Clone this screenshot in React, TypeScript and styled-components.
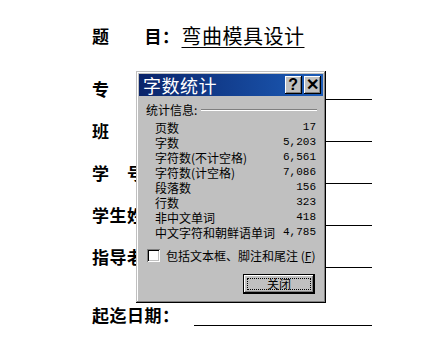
import React from "react";
import styled, { createGlobalStyle } from "styled-components";

const GlobalStyle = createGlobalStyle`
  html, body { margin: 0; padding: 0; background: #fff; }
  #root { width: 439px; height: 343px; }
`;

const Page = styled.div`
  position: relative;
  width: 439px;
  height: 343px;
  overflow: hidden;
  box-sizing: border-box;
  padding: 25px 0 0 92px;
  background: #fff;
  font-family: "Noto Sans CJK SC", sans-serif;
  color: #000;
`;

const FormRow = styled.div<{ $gap: number }>`
  display: flex;
  align-items: stretch;
  height: 22px;
  margin-top: ${(p) => p.$gap}px;
`;

const Label = styled.span`
  font-size: 17px;
  font-weight: 700;
  line-height: 22px;
  letter-spacing: 0.5px;
  white-space: pre;
`;

const TitleValue = styled.span`
  margin-left: 2px;
  font-size: 20px;
  line-height: 22px;
  letter-spacing: 0.5px;
  text-decoration: underline;
  text-underline-offset: 3px;
  text-decoration-thickness: 1px;
`;

const Blank = styled.span`
  margin-left: auto;
  margin-right: 67px;
  width: 178px;
  border-bottom: 1px solid #000;
`;

const Dialog = styled.div`
  position: absolute;
  left: 136px;
  top: 71px;
  width: 190px;
  height: 232px;
  box-sizing: border-box;
  padding: 3px;
  background: #c0c0c0;
  box-shadow: inset -1px -1px #000, inset 1px 1px #c0c0c0,
    inset -2px -2px #808080, inset 2px 2px #fff;
  display: flex;
  flex-direction: column;
  font-family: "Noto Sans CJK SC", sans-serif;
  font-size: 12px;
  color: #000;
`;

const TitleBar = styled.div`
  height: 22px;
  display: flex;
  align-items: center;
  padding: 0 2px 0 4px;
  background: linear-gradient(to right, #0a246a, #1c5cb8);
  color: #fff;
  font-size: 18px;
  line-height: 22px;
  letter-spacing: 0.5px;
`;

const CaptionButtons = styled.div`
  margin-left: auto;
  display: flex;
  gap: 2px;
`;

const CaptionButton = styled.div`
  width: 17px;
  height: 18px;
  box-sizing: border-box;
  background: #c0c0c0;
  box-shadow: inset -1px -1px #000, inset 1px 1px #fff,
    inset -2px -2px #808080;
  display: flex;
  align-items: center;
  justify-content: center;
  color: #000;
  font-family: "Liberation Sans", sans-serif;
  font-weight: 700;
  font-size: 16px;
  line-height: 1;
`;

const Body = styled.div`
  padding: 8px 7px 0 7px;
  display: flex;
  flex-direction: column;
`;

const GroupHeader = styled.div`
  display: flex;
  align-items: center;
  height: 12px;
  line-height: 12px;
  gap: 4px;
`;

const Etched = styled.span`
  flex: 1;
  height: 0;
  border-top: 1px solid #808080;
  border-bottom: 1px solid #fff;
  margin-right: -1px;
`;

const StatList = styled.div`
  margin-top: 4px;
  padding-left: 9px;
  display: flex;
  flex-direction: column;
`;

const StatRow = styled.div`
  display: flex;
  justify-content: space-between;
  align-items: center;
  height: 15px;
  line-height: 15px;
`;

const StatValue = styled.span`
  font-family: "Liberation Mono", monospace;
  font-size: 11px;
`;

const CheckRow = styled.label`
  margin-top: 9px;
  display: flex;
  align-items: center;
  gap: 6px;
  height: 13px;
  padding-left: 1px;
`;

const CheckBox = styled.span`
  width: 13px;
  height: 13px;
  box-sizing: border-box;
  background: #fff;
  box-shadow: inset 1px 1px #808080, inset -1px -1px #fff,
    inset 2px 2px #000, inset -2px -2px #c0c0c0;
`;

const Mnemonic = styled.span`
  text-decoration: underline;
`;

const ButtonRow = styled.div`
  margin-top: 12px;
  display: flex;
  justify-content: flex-end;
  padding-right: 1px;
`;

const DefaultButton = styled.div`
  width: 72px;
  height: 20px;
  box-sizing: border-box;
  border: 1px solid #000;
  background: #c0c0c0;
  box-shadow: inset -1px -1px #000, inset 1px 1px #fff,
    inset -2px -2px #808080;
  padding: 3px;
  display: flex;
`;

const FocusRect = styled.div`
  flex: 1;
  border: 1px dotted #000;
  display: flex;
  align-items: center;
  justify-content: center;
  line-height: 1;
  font-size: 12px;
`;

const stats: [string, string][] = [
  ["页数", "17"],
  ["字数", "5,203"],
  ["字符数(不计空格)", "6,561"],
  ["字符数(计空格)", "7,086"],
  ["段落数", "156"],
  ["行数", "323"],
  ["非中文单词", "418"],
  ["中文字符和朝鲜语单词", "4,785"],
];

const rows: { label: string; gap: number }[] = [
  { label: "专　　业：", gap: 31 },
  { label: "班　　级：", gap: 20 },
  { label: "学　号：", gap: 20 },
  { label: "学生姓名：", gap: 20 },
  { label: "指导老师：", gap: 20 },
  { label: "起迄日期：", gap: 36 },
];

export default function App() {
  return (
    <>
      <GlobalStyle />
      <Page>
        <FormRow $gap={0}>
          <Label>题　　目：</Label>
          <TitleValue>弯曲模具设计</TitleValue>
        </FormRow>
        {rows.map((r) => (
          <FormRow key={r.label} $gap={r.gap}>
            <Label>{r.label}</Label>
            <Blank />
          </FormRow>
        ))}
        <Dialog>
          <TitleBar>
            <span>字数统计</span>
            <CaptionButtons>
              <CaptionButton>?</CaptionButton>
              <CaptionButton>✕</CaptionButton>
            </CaptionButtons>
          </TitleBar>
          <Body>
            <GroupHeader>
              <span>统计信息:</span>
              <Etched />
            </GroupHeader>
            <StatList>
              {stats.map(([k, v]) => (
                <StatRow key={k}>
                  <span>{k}</span>
                  <StatValue>{v}</StatValue>
                </StatRow>
              ))}
            </StatList>
            <CheckRow>
              <CheckBox />
              <span>
                包括文本框、脚注和尾注 (<Mnemonic>F</Mnemonic>)
              </span>
            </CheckRow>
            <ButtonRow>
              <DefaultButton>
                <FocusRect>关闭</FocusRect>
              </DefaultButton>
            </ButtonRow>
          </Body>
        </Dialog>
      </Page>
    </>
  );
}
